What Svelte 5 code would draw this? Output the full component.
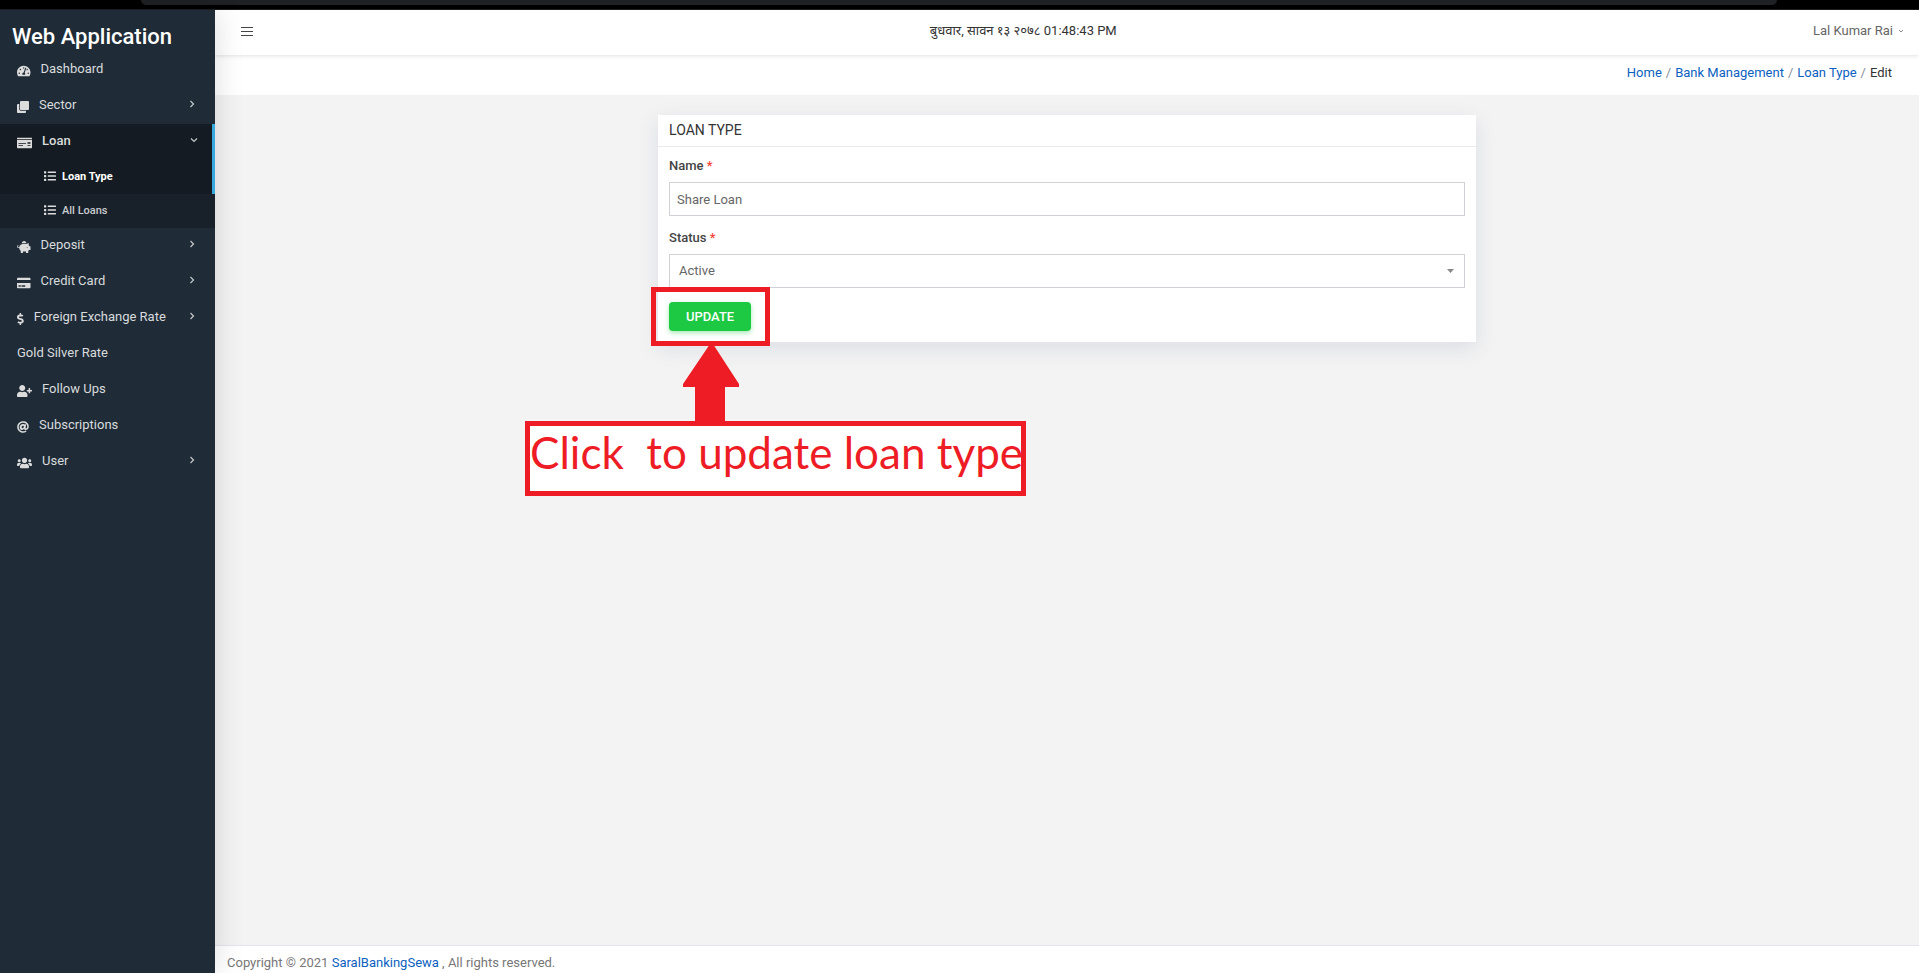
<script>
	const icons = {
		gauge: {
			w: 576,
			d: 'M288 32C128.94 32 0 160.94 0 320c0 52.8 14.25 102.26 39.06 144.8 5.61 9.62 16.3 15.2 27.44 15.2h443c11.14 0 21.83-5.58 27.44-15.2C561.75 422.26 576 372.8 576 320c0-159.06-128.94-288-288-288zm0 64c14.71 0 26.58 10.13 30.32 23.65-1.11 2.26-2.64 4.23-3.45 6.67l-9.22 27.67c-5.13 3.49-10.97 6.01-17.64 6.01-17.67 0-32-14.33-32-32S270.33 96 288 96zM96 384c-17.67 0-32-14.33-32-32s14.33-32 32-32 32 14.33 32 32-14.33 32-32 32zm48-160c-17.67 0-32-14.33-32-32s14.33-32 32-32 32 14.33 32 32-14.33 32-32 32zm246.77-72.41l-61.33 184C343.13 347.33 352 364.54 352 384c0 11.72-3.38 22.55-8.88 32H232.88c-5.5-9.45-8.88-20.28-8.88-32 0-33.94 26.5-61.43 59.9-63.59l61.34-184.01c4.17-12.56 17.73-19.45 30.36-15.17 12.57 4.19 19.35 17.79 15.17 30.36zm14.66 57.2l15.52-46.55c3.47-1.29 7.13-2.23 11.05-2.23 17.67 0 32 14.33 32 32s-14.33 32-32 32c-11.38-.01-20.89-6.28-26.57-15.22zM480 384c-17.67 0-32-14.33-32-32s14.33-32 32-32 32 14.33 32 32-14.33 32-32 32z'
		},
		clone: {
			w: 512,
			d: 'M464 0c26.51 0 48 21.49 48 48v288c0 26.51-21.49 48-48 48H176c-26.51 0-48-21.49-48-48V48c0-26.51 21.49-48 48-48h288M176 416c-44.112 0-80-35.888-80-80V128H48c-26.51 0-48 21.49-48 48v288c0 26.51 21.49 48 48 48h288c26.51 0 48-21.49 48-48v-48H176z'
		},
		check: {
			w: 640,
			d: 'M0 448c0 17.67 14.33 32 32 32h576c17.67 0 32-14.33 32-32V128H0v320zm448-208c0-8.84 7.16-16 16-16h96c8.84 0 16 7.16 16 16v32c0 8.84-7.16 16-16 16h-96c-8.84 0-16-7.16-16-16v-32zm0 120c0-4.42 3.58-8 8-8h112c4.42 0 8 3.58 8 8v16c0 4.42-3.58 8-8 8H456c-4.42 0-8-3.58-8-8v-16zM64 264c0-4.42 3.58-8 8-8h304c4.42 0 8 3.58 8 8v16c0 4.42-3.58 8-8 8H72c-4.42 0-8-3.58-8-8v-16zm0 96c0-4.42 3.58-8 8-8h176c4.42 0 8 3.58 8 8v16c0 4.42-3.58 8-8 8H72c-4.42 0-8-3.58-8-8v-16zM624 32H16C7.16 32 0 39.16 0 48v48h640V48c0-8.84-7.16-16-16-16z'
		},
		list: {
			w: 512,
			d: 'M80 368H16a16 16 0 0 0-16 16v64a16 16 0 0 0 16 16h64a16 16 0 0 0 16-16v-64a16 16 0 0 0-16-16zm0-320H16A16 16 0 0 0 0 64v64a16 16 0 0 0 16 16h64a16 16 0 0 0 16-16V64a16 16 0 0 0-16-16zm0 160H16a16 16 0 0 0-16 16v64a16 16 0 0 0 16 16h64a16 16 0 0 0 16-16v-64a16 16 0 0 0-16-16zm416 176H176a16 16 0 0 0-16 16v32a16 16 0 0 0 16 16h320a16 16 0 0 0 16-16v-32a16 16 0 0 0-16-16zm0-320H176a16 16 0 0 0-16 16v32a16 16 0 0 0 16 16h320a16 16 0 0 0 16-16V80a16 16 0 0 0-16-16zm0 160H176a16 16 0 0 0-16 16v32a16 16 0 0 0 16 16h320a16 16 0 0 0 16-16v-32a16 16 0 0 0-16-16z'
		},
		piggy: {
			w: 576,
			d: 'M560 224h-29.5c-8.8-20-21.6-37.7-37.4-52.5L512 96h-32c-29.4 0-55.4 13.5-73 34.3-7.6-1.1-15.1-2.3-23-2.3H256c-77.4 0-141.9 55-156.8 128H56c-14.8 0-26.5-13.5-23.5-28.8C34.7 215.8 45.4 208 57 208h1c3.3 0 6-2.7 6-6v-20c0-3.3-2.7-6-6-6-28.5 0-53.9 20.4-57.5 48.6C-3.9 258.8 22.7 288 56 288h40c0 52.2 25.4 98.1 64 127.3V496c0 8.8 7.2 16 16 16h64c8.8 0 16-7.2 16-16v-48h128v48c0 8.8 7.2 16 16 16h64c8.8 0 16-7.2 16-16v-80.7c11.8-8.9 22.3-19.4 31.3-31.3H560c8.8 0 16-7.2 16-16V240c0-8.8-7.2-16-16-16zm-128 64c-8.8 0-16-7.2-16-16s7.2-16 16-16 16 7.2 16 16-7.2 16-16 16zM256 96h128c5.4 0 10.7.4 15.9.8 0-.3.1-.5.1-.8 0-53-43-96-96-96s-96 43-96 96c0 2.1.5 4.1.6 6.2 15.2-3.9 31-6.2 47.4-6.2z'
		},
		card: {
			w: 576,
			d: 'M0 432c0 26.5 21.5 48 48 48h480c26.5 0 48-21.5 48-48V256H0v176zm192-68c0-6.6 5.4-12 12-12h136c6.6 0 12 5.4 12 12v40c0 6.6-5.4 12-12 12H204c-6.6 0-12-5.4-12-12v-40zm-128 0c0-6.6 5.4-12 12-12h72c6.6 0 12 5.4 12 12v40c0 6.6-5.4 12-12 12H76c-6.6 0-12-5.4-12-12v-40zM576 80v48H0V80c0-26.5 21.5-48 48-48h480c26.5 0 48 21.5 48 48z'
		},
		dollar: {
			w: 288,
			d: 'M209.2 233.4l-108-31.6C88.7 198.2 80 186.5 80 173.5c0-16.3 13.2-29.5 29.5-29.5h66.3c12.2 0 24.2 3.7 34.2 10.5 6.1 4.1 14.3 3.1 19.5-2l34.8-34c7.1-6.9 6.1-18.4-1.8-24.5C238 74.8 207.4 64.1 176 64V16c0-8.8-7.2-16-16-16h-32c-8.8 0-16 7.2-16 16v48h-2.5C45.8 64-5.4 118.7.5 183.6c4.2 46.1 39.4 83.6 83.8 96.6l102.5 30c12.5 3.7 21.2 15.3 21.2 28.3 0 16.3-13.2 29.5-29.5 29.5h-66.3C100 368 88 364.3 78 357.5c-6.1-4.1-14.3-3.1-19.5 2l-34.8 34c-7.1 6.9-6.1 18.4 1.8 24.5 24.5 19.2 55.1 29.9 86.5 30v48c0 8.8 7.2 16 16 16h32c8.8 0 16-7.2 16-16v-48.2c46.6-.9 90.3-28.6 105.7-72.7 21.5-61.6-14.6-124.8-72.5-141.7z'
		},
		userPlus: {
			w: 640,
			d: 'M624 208h-64v-64c0-8.8-7.2-16-16-16h-32c-8.8 0-16 7.2-16 16v64h-64c-8.8 0-16 7.2-16 16v32c0 8.8 7.2 16 16 16h64v64c0 8.8 7.2 16 16 16h32c8.8 0 16-7.2 16-16v-64h64c8.8 0 16-7.2 16-16v-32c0-8.8-7.2-16-16-16zm-400 48c70.7 0 128-57.3 128-128S294.7 0 224 0 96 57.3 96 128s57.3 128 128 128zm89.6 32h-16.7c-22.2 10.2-46.9 16-72.9 16s-50.6-5.8-72.9-16h-16.7C60.2 288 0 348.2 0 422.4V464c0 26.5 21.5 48 48 48h352c26.5 0 48-21.5 48-48v-41.6c0-74.2-60.2-134.4-134.4-134.4z'
		},
		at: {
			w: 512,
			d: 'M256 8C118.941 8 8 118.919 8 256c0 137.059 110.919 248 248 248 48.154 0 95.342-14.14 135.408-40.223 12.005-7.815 14.625-24.288 5.552-35.372l-10.177-12.433c-7.671-9.371-21.179-11.667-31.373-5.129C325.92 429.757 291.314 440 256 440c-101.458 0-184-82.542-184-184S154.542 72 256 72c100.139 0 184 57.619 184 160 0 38.786-21.093 79.742-58.17 83.693-17.349-.454-16.91-12.857-13.476-30.024l23.433-121.11C394.653 149.75 383.308 136 368.225 136h-44.981a13.518 13.518 0 0 0-13.432 11.993l-.01.092c-14.697-17.901-40.448-21.775-59.971-21.775-74.58 0-137.831 62.234-137.831 151.46 0 65.303 36.785 105.87 96 105.87 26.984 0 57.369-15.637 74.991-38.333 9.522 34.104 40.613 34.104 70.71 34.104C462.609 379.41 504 307.798 504 232 504 95.653 394.023 8 256 8zm-21.68 304.43c-22.249 0-36.07-15.623-36.07-40.771 0-44.993 30.779-72.729 58.63-72.729 22.292 0 35.601 15.241 35.601 40.77 0 45.061-33.875 72.73-58.161 72.73z'
		},
		users: {
			w: 640,
			d: 'M96 224c35.3 0 64-28.7 64-64s-28.7-64-64-64-64 28.7-64 64 28.7 64 64 64zm448 0c35.3 0 64-28.7 64-64s-28.7-64-64-64-64 28.7-64 64 28.7 64 64 64zm32 32h-64c-17.6 0-33.5 7.1-45.1 18.6 40.3 22.1 68.9 62 75.1 109.4h66c17.7 0 32-14.3 32-32v-32c0-35.3-28.7-64-64-64zm-256 0c61.9 0 112-50.1 112-112S381.9 32 320 32 208 82.1 208 144s50.1 112 112 112zm76.8 32h-8.3c-20.8 10-43.9 16-68.5 16s-47.6-6-68.5-16h-8.3C179.6 288 128 339.6 128 403.2V432c0 26.5 21.5 48 48 48h288c26.5 0 48-21.5 48-48v-28.8c0-63.6-51.6-115.2-115.2-115.2zm-223.7-13.4C161.5 263.1 145.6 256 128 256H64c-35.3 0-64 28.7-64 64v32c0 17.7 14.3 32 32 32h65.9c6.3-47.4 34.9-87.3 75.2-109.4z'
		}
	};

	const menu = [
		{ label: 'Dashboard', icon: 'gauge' },
		{ label: 'Sector', icon: 'clone', more: true },
		{
			label: 'Loan',
			icon: 'check',
			more: true,
			open: true,
			children: [{ label: 'Loan Type', active: true }, { label: 'All Loans' }]
		},
		{ label: 'Deposit', icon: 'piggy', more: true },
		{ label: 'Credit Card', icon: 'card', more: true },
		{ label: 'Foreign Exchange Rate', icon: 'dollar', more: true },
		{ label: 'Gold Silver Rate' },
		{ label: 'Follow Ups', icon: 'userPlus' },
		{ label: 'Subscriptions', icon: 'at' },
		{ label: 'User', icon: 'users', more: true }
	];

	const crumbs = ['Home', 'Bank Management', 'Loan Type'];

	let name = $state('Share Loan');
	let status = $state('Active');
</script>

{#snippet icon(key)}
	<svg class="icon" viewBox="0 0 {icons[key].w} 512" aria-hidden="true">
		<path d={icons[key].d} />
	</svg>
{/snippet}

<div class="page">
	<div class="chrome"><div class="tab"></div></div>

	<div class="shell">
		<aside class="sidebar">
			<div class="brand">Web Application</div>
			<nav>
				<ul>
					{#each menu as item}
						<li>
							<a href="#top" class="item" class:open={item.open}>
								{#if item.icon}{@render icon(item.icon)}{/if}
								<span class="label">{item.label}</span>
								{#if item.more}
									<svg class="chevron" viewBox="0 0 8 8" aria-hidden="true">
										<path d={item.open ? 'M1 2.5l3 3 3-3' : 'M1.5 1l3 3-3 3'} />
									</svg>
								{/if}
							</a>
							{#if item.children}
								<ul class="sub">
									{#each item.children as child}
										<li>
											<a href="#top" class="subitem" class:active={child.active}>
												{@render icon('list')}
												<span>{child.label}</span>
											</a>
										</li>
									{/each}
								</ul>
							{/if}
						</li>
					{/each}
				</ul>
			</nav>
		</aside>

		<div class="main">
			<header class="topbar">
				<div class="left">
					<button class="toggle" type="button" aria-label="Toggle menu">
						<svg viewBox="0 0 12 10" aria-hidden="true">
							<path d="M0 1.5h12M0 5.5h12M0 9.5h12" />
						</svg>
					</button>
				</div>
				<div class="clock">बुधवार, सावन १३ २०७८ 01:48:43 PM</div>
				<div class="right">
					<button class="profile" type="button">
						Lal Kumar Rai
						<svg viewBox="0 0 6 6" aria-hidden="true"><path d="M1 2l2 2 2-2" /></svg>
					</button>
				</div>
			</header>

			<nav class="crumbs" aria-label="Breadcrumb">
				{#each crumbs as crumb}
					<a href="#top">{crumb}</a>
					<span class="slash">/</span>
				{/each}
				<span>Edit</span>
			</nav>

			<main>
				<form class="panel" onsubmit={(e) => e.preventDefault()}>
					<h1>LOAN TYPE</h1>
					<div class="fields">
						<label for="name">Name <span class="req">*</span></label>
						<input id="name" type="text" bind:value={name} />

						<label for="status">Status <span class="req">*</span></label>
						<div class="select">
							<select id="status" bind:value={status}>
								<option>Active</option>
								<option>Inactive</option>
							</select>
							<svg class="caret" viewBox="0 0 7 4" aria-hidden="true"><path d="M0 0h7L3.5 4z" /></svg>
						</div>

						<div class="action">
							<button class="update" type="submit">UPDATE</button>
							<div class="ring"></div>
							<svg class="arrow" viewBox="0 0 56 78" aria-hidden="true">
								<path d="M27 0h3l26 40v3H42v35H12V43H0v-3z" />
							</svg>
							<div class="callout">Click  to update loan type</div>
						</div>
					</div>
				</form>
			</main>

			<footer>
				Copyright © 2021 <a href="#top">SaralBankingSewa</a> , All rights reserved.
			</footer>
		</div>
	</div>
</div>

<style>
	:global(body) {
		margin: 0;
	}

	.page {
		min-height: 100vh;
		display: flex;
		flex-direction: column;
		font-family: Roboto, 'Noto Sans', sans-serif;
		font-size: 13px;
		line-height: 20px;
		color: #333;
		background: #f3f3f3;
	}

	.page,
	.page * {
		box-sizing: border-box;
	}

	a {
		color: #0b5fc1;
		text-decoration: none;
	}

	button {
		padding: 0;
		border: 0;
		background: none;
		font: inherit;
		color: inherit;
		cursor: pointer;
	}

	ul {
		margin: 0;
		padding: 0;
		list-style: none;
	}

	.chrome {
		height: 10px;
		padding: 0 142px 0 141px;
		background: #000;
		border-bottom: 1px solid #1c1d1f;
	}

	.tab {
		height: 5px;
		background: #202124;
		border-radius: 0 0 12px 12px;
	}

	.shell {
		flex: 1;
		display: flex;
	}

	/* sidebar */

	.sidebar {
		position: relative;
		z-index: 2;
		flex: none;
		width: 215px;
		background: #1f2c37;
		box-shadow: 0 0 28px rgba(0, 0, 0, 0.14);
	}

	.brand {
		height: 42px;
		padding: 12px 12px 0;
		font-size: 22px;
		line-height: 30px;
		font-weight: 500;
		color: #fff;
	}

	.item {
		display: flex;
		align-items: center;
		height: 36px;
		padding: 0 18px 0 17px;
		gap: 10px;
		color: #d9dbdd;
	}

	.item.open {
		background: #141b22;
		border-right: 3px solid #37a9dc;
		padding-right: 14px;
		font-weight: 500;
	}

	.icon {
		height: 12px;
		fill: #dcdcdc;
	}

	.item .icon {
		margin-top: 1px;
	}

	.label {
		flex: 1;
		padding-bottom: 2px;
	}

	.chevron {
		width: 8px;
		height: 8px;
		margin-bottom: 4px;
		fill: none;
		stroke: #c4c8cb;
		stroke-width: 1.2;
	}

	.sub {
		padding-bottom: 1px;
		background: #18212a;
	}

	.subitem {
		display: flex;
		align-items: center;
		height: 33px;
		padding-left: 44px;
		gap: 6px;
		font-size: 11px;
		font-weight: 500;
		color: #c9cccf;
	}

	.subitem .icon {
		margin-bottom: 2px;
	}

	.subitem.active {
		height: 34px;
		background: #141b22;
		border-right: 3px solid #37a9dc;
		font-weight: 700;
		color: #fff;
	}

	/* header */

	.main {
		flex: 1;
		min-width: 0;
		display: flex;
		flex-direction: column;
	}

	.topbar {
		position: relative;
		z-index: 1;
		display: flex;
		align-items: center;
		height: 45px;
		padding: 0 15px 4px 26px;
		background: #fff;
		box-shadow: 0 1px 4px rgba(0, 0, 0, 0.12);
	}

	/* the clock sits slightly left of the middle */
	.left {
		flex: 7 1 0;
	}

	.right {
		flex: 8 1 0;
		display: flex;
		justify-content: flex-end;
	}

	.toggle,
	.profile {
		display: flex;
		align-items: center;
	}

	.toggle svg {
		width: 12px;
		height: 10px;
		fill: none;
		stroke: #444;
	}

	.profile {
		gap: 5px;
		color: #666;
	}

	.profile svg {
		width: 6px;
		height: 6px;
		fill: none;
		stroke: #888;
	}

	.crumbs {
		display: flex;
		justify-content: flex-end;
		gap: 4px;
		padding: 8px 27px 12px;
		background: #fff;
	}

	.slash {
		color: #868e96;
	}

	/* form */

	main {
		flex: 1;
		padding-top: 20px;
	}

	.panel {
		width: 48%;
		margin: 0 auto;
		background: #fff;
		box-shadow: 0 6px 20px rgba(60, 70, 140, 0.12);
	}

	h1 {
		margin: 0;
		padding: 5px 11px 6px;
		border-bottom: 1px solid #ebebeb;
		font-size: 14px;
		line-height: 20px;
		font-weight: 400;
	}

	.fields {
		padding: 9px 11px 11px;
	}

	label {
		display: block;
		margin-bottom: 6px;
		font-weight: 500;
		color: #444;
	}

	.req {
		color: #f44336;
	}

	input,
	select {
		display: block;
		width: 100%;
		height: 34px;
		border: 1px solid #d0d2d8;
		border-radius: 0;
		background: #fff;
		font: inherit;
		color: #666;
	}

	input {
		margin-bottom: 12px;
		padding: 0 7px;
	}

	select {
		appearance: none;
		padding: 0 9px;
	}

	.select {
		position: relative;
	}

	.caret {
		position: absolute;
		top: 15px;
		right: 11px;
		width: 7px;
		height: 4px;
		fill: #888;
		pointer-events: none;
	}

	.action {
		position: relative;
		width: 82px;
		margin-top: 14px;
	}

	.update {
		display: block;
		width: 100%;
		height: 29px;
		border-radius: 4px;
		background: #1dc943;
		box-shadow: 0 2px 5px rgba(29, 201, 67, 0.4);
		font-weight: 500;
		color: #fff;
	}

	/* guide marks drawn around the update button */

	.ring {
		position: absolute;
		top: -15px;
		left: -18px;
		width: 119px;
		height: 59px;
		border: 5px solid #ee1c25;
		pointer-events: none;
	}

	.arrow {
		position: absolute;
		top: 42px;
		left: 14px;
		width: 56px;
		height: 78px;
		fill: #ee1c25;
	}

	.callout {
		position: absolute;
		top: 119px;
		left: -144px;
		width: 501px;
		height: 75px;
		border: 5px solid #ee1c25;
		background: #fff;
		font-family: Lato, sans-serif;
		font-size: 44px;
		line-height: 52px;
		white-space: pre;
		color: #ee1c25;
	}

	footer {
		padding: 7px 12px 0;
		border-top: 1px solid #e4e5ec;
		background: #fff;
		color: #777;
	}
</style>
